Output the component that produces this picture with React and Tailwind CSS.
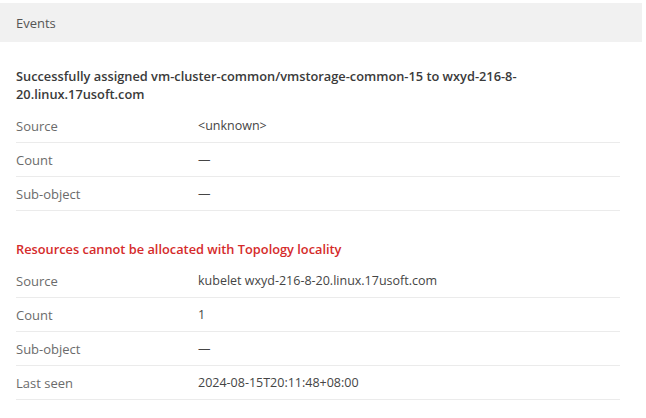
const events = [
  {
    title: "Successfully assigned vm-cluster-common/vmstorage-common-15 to wxyd-216-8-20.linux.17usoft.com",
    warning: false,
    rows: [
      ["Source", "<unknown>"],
      ["Count", "—"],
      ["Sub-object", "—"],
    ],
  },
  {
    title: "Resources cannot be allocated with Topology locality",
    warning: true,
    rows: [
      ["Source", "kubelet wxyd-216-8-20.linux.17usoft.com"],
      ["Count", "1"],
      ["Sub-object", "—"],
      ["Last seen", "2024-08-15T20:11:48+08:00"],
    ],
  },
];

function EventBlock({ event }) {
  return (
    <div className="flex flex-col">
      <h3
        className={`text-[12.8px] leading-[18px] font-semibold ${
          event.warning ? "text-[#d52b2b]" : "text-[#3a3a3a]"
        }`}
      >
        {event.title}
      </h3>
      <div className="mt-[6px] flex flex-col">
        {event.rows.map(([label, value]) => (
          <div key={label} className="flex items-center h-[34px] pt-[2px] border-b border-[#ebebeb]">
            <div className="w-[182px] shrink-0 text-[13px] text-[#6b6b6b]">{label}</div>
            <div className="text-[12.5px] text-[#454545]">{value}</div>
          </div>
        ))}
      </div>
    </div>
  );
}

export default function App() {
  return (
    <div className="min-h-screen bg-white pt-[3px] font-['Open_Sans',sans-serif]">
      <div className="w-[642px] h-[39px] bg-[#f1f1f1] flex items-center px-4 pt-[2px] text-[13px] text-[#555]">
        Events
      </div>
      <div className="w-[620px] pl-4 pt-[25px] flex flex-col gap-[29px]">
        {events.map((event, i) => (
          <EventBlock key={i} event={event} />
        ))}
      </div>
    </div>
  );
}
